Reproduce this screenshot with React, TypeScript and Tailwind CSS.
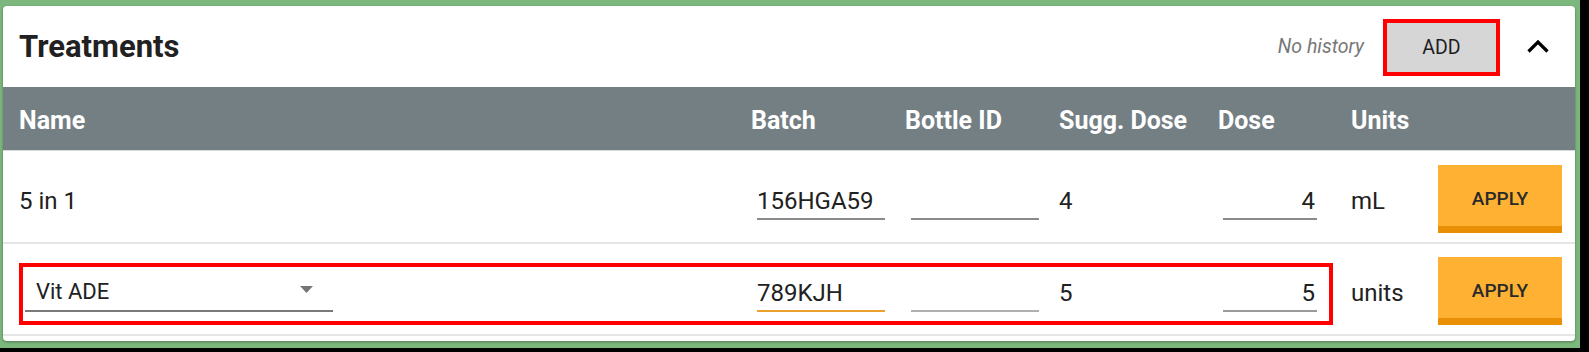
import React from "react";

const font = { fontFamily: "Roboto, 'Noto Sans', sans-serif" };

const Field = ({ value, width, align = "left", line = "border-[#8a8a8a]" }: { value: string; width: string; align?: "left" | "right"; line?: string }) => (
  <div className={`${width} mt-[13px] border-b-2 ${line} pb-[3px] text-[24px] leading-[28px] text-[#212121] ${align === "right" ? "text-right pr-[2px]" : ""}`}>
    {value || "\u00a0"}
  </div>
);

const Plain = ({ children }: { children: React.ReactNode }) => (
  <div className="mt-[13px] pb-[5px] text-[24px] leading-[28px] text-[#212121]">{children}</div>
);

const ApplyButton = () => (
  <button className="mt-[4px] h-[68px] w-[124px] bg-[#ffb133] border-b-[7px] border-[#e98f06] pt-[8px] text-[19px] font-medium text-[#2a2a2a]">
    APPLY
  </button>
);

const cols = "grid grid-cols-[732px_154px_154px_159px_133px_87px_124px] pl-[16px]";

export default function App() {
  return (
    <div className="w-[1589px] h-[352px] bg-black" style={font}>
      <div className="w-[1580px] h-[348px] bg-[#7cb87e] pt-[6px] pl-[3px] pr-[5px] pb-[7px]">
        <div className="h-full bg-white rounded-[4px] shadow-[0_1px_3px_rgba(0,0,0,0.35)] flex flex-col overflow-hidden">
          {/* title bar */}
          <div className="h-[81px] shrink-0 flex items-center pl-[16px] pr-[25px]">
            <h2 className="text-[31px] font-bold text-[#212121] leading-none">Treatments</h2>
            <span className="ml-auto text-[19.5px] italic text-[#777]">No history</span>
            <button className="ml-[19px] mt-[2px] w-[117px] h-[57px] bg-[#d6d6d6] border-4 border-[#ff0000] text-[19.5px] text-[#1e1e1e]">
              ADD
            </button>
            <svg className="ml-[26px] mt-[-2px]" width="24" height="16" viewBox="0 0 24 16">
              <polyline points="2.5,13.5 12,4 21.5,13.5" fill="none" stroke="#000" strokeWidth="3.2" />
            </svg>
          </div>

          {/* column header */}
          <div className={`${cols} h-[64px] shrink-0 items-center pt-[4px] bg-[#747f84] border-b border-[#d5d9db] text-[25px] leading-[28px] font-bold text-white`}>
            <div>Name</div>
            <div>Batch</div>
            <div>Bottle ID</div>
            <div>Sugg. Dose</div>
            <div>Dose</div>
            <div>Units</div>
            <div />
          </div>

          {/* row 1 */}
          <div className={`${cols} h-[93px] shrink-0 items-center border-b-2 border-[#e6e6e6]`}>
            <Plain>5 in 1</Plain>
            <div className="pl-[6px]"><Field value="156HGA59" width="w-[128px]" /></div>
            <div className="pl-[6px]"><Field value="" width="w-[128px]" /></div>
            <Plain>4</Plain>
            <div className="pl-[5px]"><Field value="4" width="w-[94px]" align="right" /></div>
            <Plain>mL</Plain>
            <ApplyButton />
          </div>

          {/* row 2 */}
          <div className={`${cols} relative h-[92px] shrink-0 items-center border-b-2 border-[#e6e6e6]`}>
            <div className="pl-[6px]">
              <div className="w-[308px] mt-[13px] border-b-2 border-[#7a7a7a] pb-[5px] pl-[11px] pr-[20px] flex items-center text-[22px] leading-[26px] text-[#212121]">
                <span>Vit ADE</span>
                <svg className="ml-auto mt-[-6px]" width="13" height="7" viewBox="0 0 13 7">
                  <polygon points="0,0 13,0 6.5,7" fill="#757575" />
                </svg>
              </div>
            </div>
            <div className="pl-[6px]"><Field value="789KJH" width="w-[128px]" line="border-[#eaa02f]" /></div>
            <div className="pl-[6px]"><Field value="" width="w-[128px]" line="border-[#b0b0b0]" /></div>
            <Plain>5</Plain>
            <div className="pl-[5px]"><Field value="5" width="w-[94px]" align="right" line="border-[#9a9a9a]" /></div>
            <Plain>units</Plain>
            <ApplyButton />
            {/* highlight overlay */}
            <div className="absolute left-[16px] top-[19px] w-[1314px] h-[62px] border-4 border-[#ff0000] pointer-events-none" />
          </div>
        </div>
      </div>
    </div>
  );
}
